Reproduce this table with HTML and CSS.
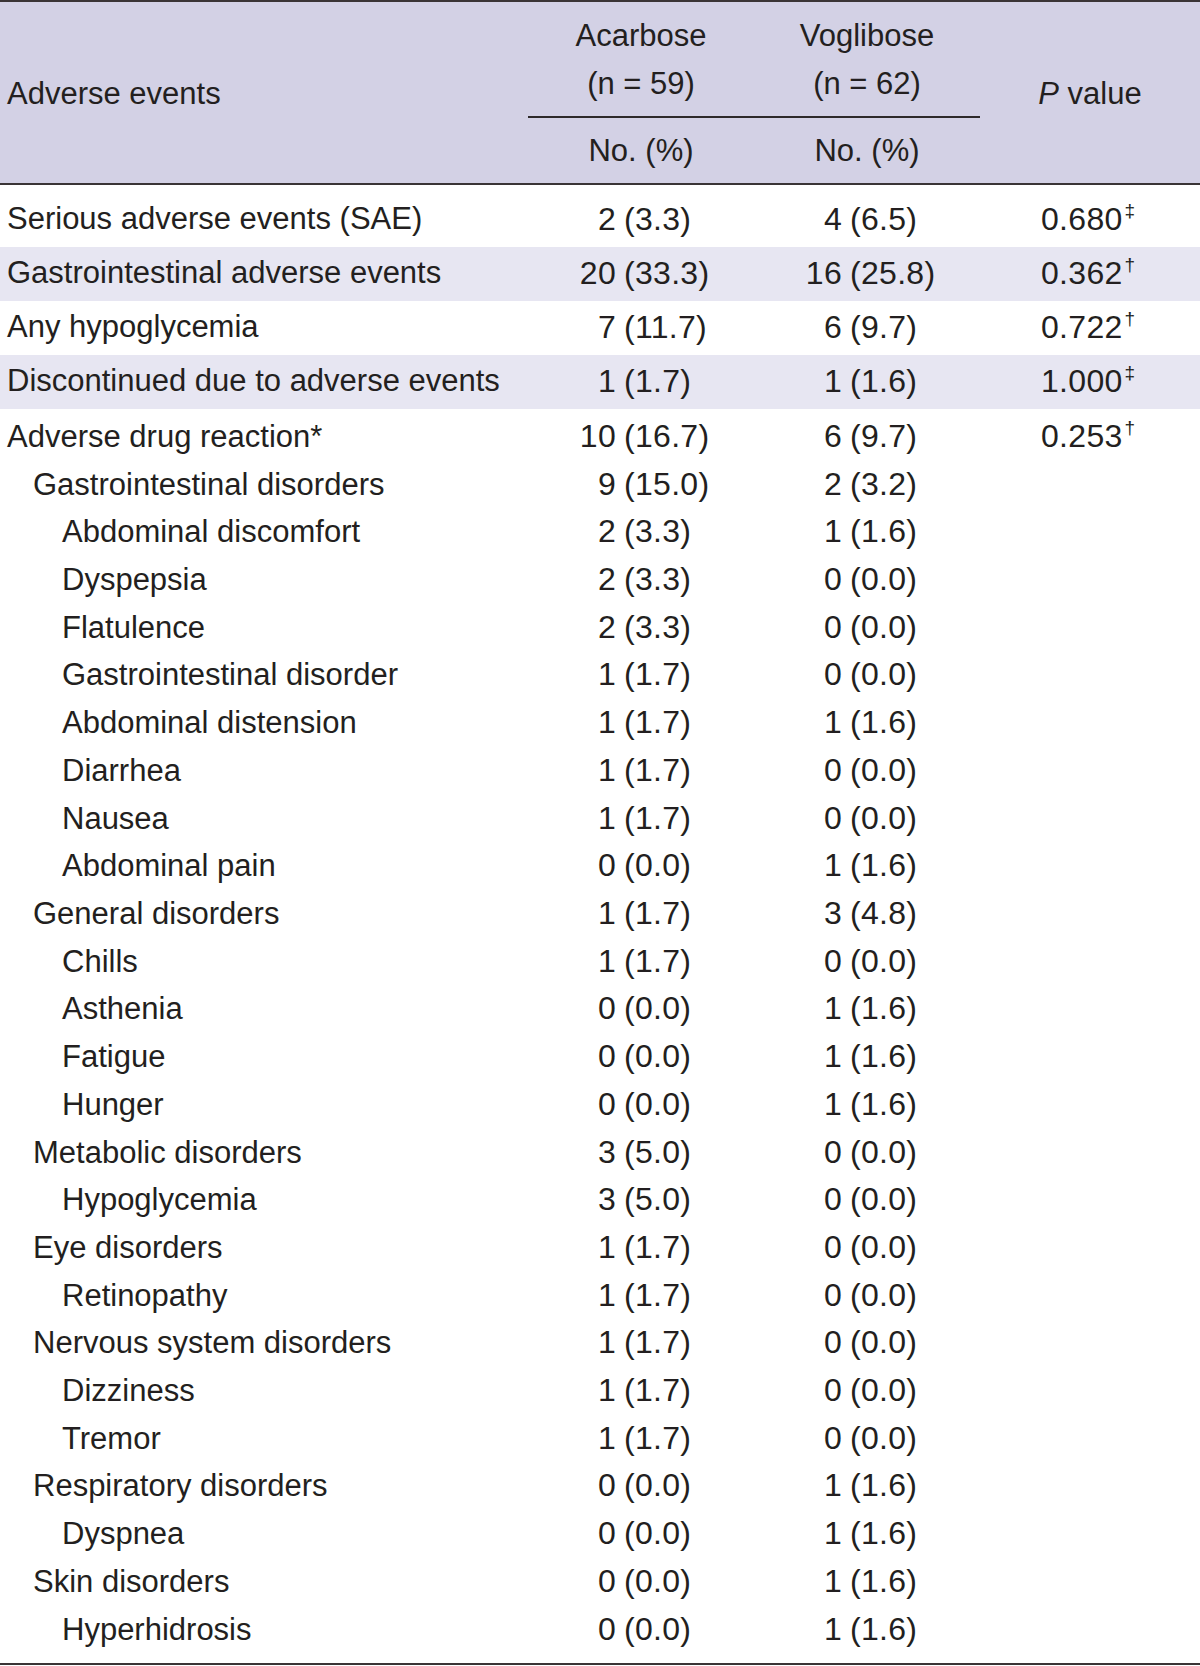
FILE: index.html
```html
<!DOCTYPE html>
<html lang="en">
<head>
<meta charset="utf-8">
<title>Adverse events</title>
<link rel="stylesheet" href="styles.css">
</head>
<body>
<table class="ae">
  <colgroup>
    <col class="c-label">
    <col class="c-grp">
    <col class="c-grp">
    <col class="c-p">
  </colgroup>
  <thead>
    <tr class="h1">
      <th class="h-label" rowspan="2">Adverse events</th>
      <th class="h-grp">Acarbose<br>(n = 59)</th>
      <th class="h-grp">Voglibose<br>(n = 62)</th>
      <th class="h-p" rowspan="2"><i>P</i> value</th>
    </tr>
    <tr class="h2">
      <th class="h-sub">No. (%)</th>
      <th class="h-sub">No. (%)</th>
    </tr>
  </thead>
  <tbody>
    <tr class="big first"><td class="l0">Serious adverse events (SAE)</td><td class="num"><span class="c">2</span><span class="pc">(3.3)</span></td><td class="num"><span class="c">4</span><span class="pc">(6.5)</span></td><td class="pv">0.680<sup>‡</sup></td></tr>
    <tr class="big band"><td class="l0">Gastrointestinal adverse events</td><td class="num"><span class="c">20</span><span class="pc">(33.3)</span></td><td class="num"><span class="c">16</span><span class="pc">(25.8)</span></td><td class="pv">0.362<sup>†</sup></td></tr>
    <tr class="big"><td class="l0">Any hypoglycemia</td><td class="num"><span class="c">7</span><span class="pc">(11.7)</span></td><td class="num"><span class="c">6</span><span class="pc">(9.7)</span></td><td class="pv">0.722<sup>†</sup></td></tr>
    <tr class="big band"><td class="l0">Discontinued due to adverse events</td><td class="num"><span class="c">1</span><span class="pc">(1.7)</span></td><td class="num"><span class="c">1</span><span class="pc">(1.6)</span></td><td class="pv">1.000<sup>‡</sup></td></tr>
    <tr class="adr"><td class="l0">Adverse drug reaction*</td><td class="num"><span class="c">10</span><span class="pc">(16.7)</span></td><td class="num"><span class="c">6</span><span class="pc">(9.7)</span></td><td class="pv">0.253<sup>†</sup></td></tr>
    <tr><td class="l1">Gastrointestinal disorders</td><td class="num"><span class="c">9</span><span class="pc">(15.0)</span></td><td class="num"><span class="c">2</span><span class="pc">(3.2)</span></td><td class="pv"></td></tr>
    <tr><td class="l2">Abdominal discomfort</td><td class="num"><span class="c">2</span><span class="pc">(3.3)</span></td><td class="num"><span class="c">1</span><span class="pc">(1.6)</span></td><td class="pv"></td></tr>
    <tr><td class="l2">Dyspepsia</td><td class="num"><span class="c">2</span><span class="pc">(3.3)</span></td><td class="num"><span class="c">0</span><span class="pc">(0.0)</span></td><td class="pv"></td></tr>
    <tr><td class="l2">Flatulence</td><td class="num"><span class="c">2</span><span class="pc">(3.3)</span></td><td class="num"><span class="c">0</span><span class="pc">(0.0)</span></td><td class="pv"></td></tr>
    <tr><td class="l2">Gastrointestinal disorder</td><td class="num"><span class="c">1</span><span class="pc">(1.7)</span></td><td class="num"><span class="c">0</span><span class="pc">(0.0)</span></td><td class="pv"></td></tr>
    <tr><td class="l2">Abdominal distension</td><td class="num"><span class="c">1</span><span class="pc">(1.7)</span></td><td class="num"><span class="c">1</span><span class="pc">(1.6)</span></td><td class="pv"></td></tr>
    <tr><td class="l2">Diarrhea</td><td class="num"><span class="c">1</span><span class="pc">(1.7)</span></td><td class="num"><span class="c">0</span><span class="pc">(0.0)</span></td><td class="pv"></td></tr>
    <tr><td class="l2">Nausea</td><td class="num"><span class="c">1</span><span class="pc">(1.7)</span></td><td class="num"><span class="c">0</span><span class="pc">(0.0)</span></td><td class="pv"></td></tr>
    <tr><td class="l2">Abdominal pain</td><td class="num"><span class="c">0</span><span class="pc">(0.0)</span></td><td class="num"><span class="c">1</span><span class="pc">(1.6)</span></td><td class="pv"></td></tr>
    <tr><td class="l1">General disorders</td><td class="num"><span class="c">1</span><span class="pc">(1.7)</span></td><td class="num"><span class="c">3</span><span class="pc">(4.8)</span></td><td class="pv"></td></tr>
    <tr><td class="l2">Chills</td><td class="num"><span class="c">1</span><span class="pc">(1.7)</span></td><td class="num"><span class="c">0</span><span class="pc">(0.0)</span></td><td class="pv"></td></tr>
    <tr><td class="l2">Asthenia</td><td class="num"><span class="c">0</span><span class="pc">(0.0)</span></td><td class="num"><span class="c">1</span><span class="pc">(1.6)</span></td><td class="pv"></td></tr>
    <tr><td class="l2">Fatigue</td><td class="num"><span class="c">0</span><span class="pc">(0.0)</span></td><td class="num"><span class="c">1</span><span class="pc">(1.6)</span></td><td class="pv"></td></tr>
    <tr><td class="l2">Hunger</td><td class="num"><span class="c">0</span><span class="pc">(0.0)</span></td><td class="num"><span class="c">1</span><span class="pc">(1.6)</span></td><td class="pv"></td></tr>
    <tr><td class="l1">Metabolic disorders</td><td class="num"><span class="c">3</span><span class="pc">(5.0)</span></td><td class="num"><span class="c">0</span><span class="pc">(0.0)</span></td><td class="pv"></td></tr>
    <tr><td class="l2">Hypoglycemia</td><td class="num"><span class="c">3</span><span class="pc">(5.0)</span></td><td class="num"><span class="c">0</span><span class="pc">(0.0)</span></td><td class="pv"></td></tr>
    <tr><td class="l1">Eye disorders</td><td class="num"><span class="c">1</span><span class="pc">(1.7)</span></td><td class="num"><span class="c">0</span><span class="pc">(0.0)</span></td><td class="pv"></td></tr>
    <tr><td class="l2">Retinopathy</td><td class="num"><span class="c">1</span><span class="pc">(1.7)</span></td><td class="num"><span class="c">0</span><span class="pc">(0.0)</span></td><td class="pv"></td></tr>
    <tr><td class="l1">Nervous system disorders</td><td class="num"><span class="c">1</span><span class="pc">(1.7)</span></td><td class="num"><span class="c">0</span><span class="pc">(0.0)</span></td><td class="pv"></td></tr>
    <tr><td class="l2">Dizziness</td><td class="num"><span class="c">1</span><span class="pc">(1.7)</span></td><td class="num"><span class="c">0</span><span class="pc">(0.0)</span></td><td class="pv"></td></tr>
    <tr><td class="l2">Tremor</td><td class="num"><span class="c">1</span><span class="pc">(1.7)</span></td><td class="num"><span class="c">0</span><span class="pc">(0.0)</span></td><td class="pv"></td></tr>
    <tr><td class="l1">Respiratory disorders</td><td class="num"><span class="c">0</span><span class="pc">(0.0)</span></td><td class="num"><span class="c">1</span><span class="pc">(1.6)</span></td><td class="pv"></td></tr>
    <tr><td class="l2">Dyspnea</td><td class="num"><span class="c">0</span><span class="pc">(0.0)</span></td><td class="num"><span class="c">1</span><span class="pc">(1.6)</span></td><td class="pv"></td></tr>
    <tr><td class="l1">Skin disorders</td><td class="num"><span class="c">0</span><span class="pc">(0.0)</span></td><td class="num"><span class="c">1</span><span class="pc">(1.6)</span></td><td class="pv"></td></tr>
    <tr class="last"><td class="l2">Hyperhidrosis</td><td class="num"><span class="c">0</span><span class="pc">(0.0)</span></td><td class="num"><span class="c">1</span><span class="pc">(1.6)</span></td><td class="pv"></td></tr>
  </tbody>
</table>
</body>
</html>
```

FILE: styles.css
```css
html, body {
  margin: 0;
  padding: 0;
  background: #ffffff;
}

body {
  font-family: "Liberation Sans", Arial, sans-serif;
  font-size: 31px;
  color: #231f20;
}

.ae {
  width: 1200px;
  table-layout: fixed;
  border-collapse: separate;
  border-spacing: 0;
}

.c-label { width: 528px; }
.c-grp { width: 226px; }
.c-p { width: 220px; }

.ae th {
  font-weight: normal;
  background: #d3d1e5;
  padding: 0;
  line-height: 48px;
}

.h1 th {
  border-top: 2px solid #3a3436;
}

.ae th.h-label {
  text-align: left;
  padding: 3px 0 0 7px;
  vertical-align: middle;
  border-bottom: 2px solid #3a3436;
}

.ae th.h-p {
  text-align: center;
  padding: 3px 0 0 0;
  vertical-align: middle;
  border-bottom: 2px solid #3a3436;
}

.ae th.h-grp {
  text-align: center;
  padding: 10.4px 0 7.6px 0;
  border-bottom: 2px solid #2e2a2b;
}

.ae th.h-sub {
  text-align: center;
  padding: 8.9px 0 8.1px 0;
  border-bottom: 2px solid #3a3436;
}

.ae td {
  padding: 0;
  line-height: 47.7px;
  white-space: nowrap;
  vertical-align: top;
}

.ae tr.big td {
  line-height: 50px;
  padding-top: 1.5px;
  padding-bottom: 2.5px;
}

.ae tr.first td {
  padding-top: 9.5px;
}

.ae tr.adr td {
  padding-top: 4px;
}

.ae tr.band td {
  background: #e7e6f2;
}

.ae tr.last td {
  padding-bottom: 9.8px;
  border-bottom: 2px solid #3a3436;
}

.ae td.l0 { padding-left: 7px; }
.ae td.l1 { padding-left: 33px; }
.ae td.l2 { padding-left: 62px; }

.ae td.num,
.ae td.pv {
  font-size: 32px;
  letter-spacing: 0.3px;
}

.num .c {
  display: inline-block;
  width: 88px;
  text-align: right;
}

.num .pc {
  display: inline-block;
  margin-left: 8px;
}

.ae td.pv {
  padding-left: 61px;
}

.pv sup {
  font-size: 19px;
  line-height: 0;
  vertical-align: 13px;
  margin-left: 2px;
}
```
